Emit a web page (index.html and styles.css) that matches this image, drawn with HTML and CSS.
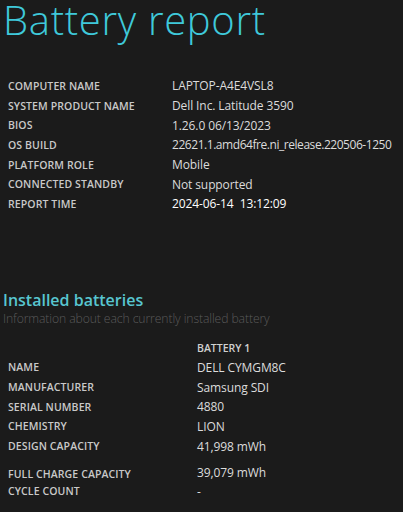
FILE: index.html
```html
<!DOCTYPE html>
<html>
<head>
<meta charset="utf-8">
<link rel="stylesheet" href="styles.css">
</head>
<body>
<div class="page">
  <h1 class="title">Battery report</h1>
  <div class="info">
    <div class="row"><div class="label">COMPUTER NAME</div><div class="value">LAPTOP-A4E4VSL8</div></div>
    <div class="row"><div class="label">SYSTEM PRODUCT NAME</div><div class="value">Dell Inc. Latitude 3590</div></div>
    <div class="row"><div class="label">BIOS</div><div class="value">1.26.0 06/13/2023</div></div>
    <div class="row"><div class="label">OS BUILD</div><div class="value tight">22621.1.amd64fre.ni_release.220506-1250</div></div>
    <div class="row"><div class="label">PLATFORM ROLE</div><div class="value">Mobile</div></div>
    <div class="row"><div class="label">CONNECTED STANDBY</div><div class="value">Not supported</div></div>
    <div class="row"><div class="label">REPORT TIME</div><div class="value strong">2024-06-14&nbsp;&nbsp;13:12:09</div></div>
  </div>
  <h2 class="section">Installed batteries</h2>
  <div class="subtitle">Information about each currently installed battery</div>
  <div class="batt">
    <div class="row"><div class="label"></div><div class="head">BATTERY 1</div></div>
    <div class="row"><div class="label">NAME</div><div class="value">DELL CYMGM8C</div></div>
    <div class="row"><div class="label">MANUFACTURER</div><div class="value">Samsung SDI</div></div>
    <div class="row"><div class="label">SERIAL NUMBER</div><div class="value">4880</div></div>
    <div class="row"><div class="label">CHEMISTRY</div><div class="value">LION</div></div>
    <div class="row"><div class="label">DESIGN CAPACITY</div><div class="value">41,998 mWh</div></div>
    <div class="row tall"><div class="label">FULL CHARGE CAPACITY</div><div class="value">39,079 mWh</div></div>
    <div class="row"><div class="label">CYCLE COUNT</div><div class="value">-</div></div>
  </div>
</div>
</body>
</html>
```
FILE: styles.css
```css
html, body {
  margin: 0;
  padding: 0;
  background: #1b1b1b;
}
.page {
  font-family: "Open Sans", "Noto Sans", sans-serif;
  padding: 0 0 0 3px;
  width: 400px;
  height: 512px;
  overflow: hidden;
}
.title {
  margin: 0;
  font-weight: 300;
  font-size: 40px;
  line-height: 35px;
  height: 35px;
  padding-top: 2px;
  color: #3fc9da;
  letter-spacing: 0.7px;
  white-space: nowrap;
}
.info {
  display: flex;
  flex-direction: column;
  margin-top: 39px;
  padding-left: 5px;
}
.batt {
  display: flex;
  flex-direction: column;
  margin-top: 10px;
  padding-left: 5px;
}
.row {
  display: flex;
  align-items: center;
  height: 19.7px;
  white-space: nowrap;
}
.row.tall {
  height: 25.5px;
  align-items: flex-end;
  padding-bottom: 0;
}
.info .label {
  width: 164px;
  flex: none;
}
.batt .label {
  width: 189px;
  flex: none;
}
.label {
  font-size: 10.5px;
  font-weight: 600;
  color: #c9c9c9;
  letter-spacing: 0.1px;
}
.value {
  font-size: 12px;
  color: #dcdcdc;
  letter-spacing: -0.1px;
}
.value.tight {
  letter-spacing: -0.45px;
}
.value.strong {
  color: #ffffff;
}
.section {
  margin: 76px 0 0 0;
  font-size: 16px;
  font-weight: 600;
  color: #58c6d0;
  line-height: 20px;
}
.subtitle {
  font-size: 12.2px;
  font-weight: 300;
  color: #5a5a5a;
  line-height: 18px;
  letter-spacing: -0.1px;
}
.head {
  font-size: 10.5px;
  font-weight: 600;
  color: #d0d0d0;
}
```
